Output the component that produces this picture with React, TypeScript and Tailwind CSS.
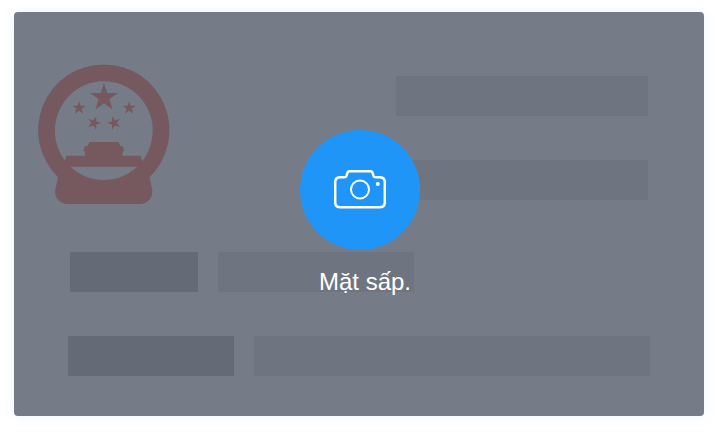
const STAR =
  "0,-10 2.25,-3.09 9.51,-3.09 3.63,1.18 5.88,8.09 0,3.82 -5.88,8.09 -3.63,1.18 -9.51,-3.09 -2.25,-3.09";

function Emblem() {
  return (
    <svg
      viewBox="0 0 132 140"
      className="h-[140px] w-[132px] shrink-0 fill-[#76595f]"
      aria-hidden="true"
    >
      <path
        fillRule="evenodd"
        d="M65.8 0.4A65.7 65.7 0 0 1 111.6 113.2L114.2 126C115.2 133.5 110 140 102 140H29.5C21.5 140 16.2 133.5 17.2 126L20 113.2A65.7 65.7 0 0 1 65.8 0.4ZM65.8 17.2A48.9 49.4 0 1 0 65.8 116A48.9 49.4 0 1 0 65.8 17.2Z"
      />
      <path d="M26.5 98L28.3 91.8H47V88L45.2 86.5L47 82H49.5L51.5 78H80.5L82.3 82H84.3L86.4 86.5L84.5 88V91.8H102.8L104.5 98V102.8H26.5Z" />
      <polygon points={STAR} transform="translate(66 33.6) scale(1.47)" />
      <polygon points={STAR} transform="translate(41 44) scale(0.7)" />
      <polygon points={STAR} transform="translate(91.2 44) scale(0.7)" />
      <polygon points={STAR} transform="translate(56 59) rotate(18) scale(0.72)" />
      <polygon points={STAR} transform="translate(76.2 59) rotate(-18) scale(0.72)" />
    </svg>
  );
}

function CameraIcon() {
  return (
    <svg
      viewBox="0 0 52 40"
      className="h-10 w-[52px] fill-none stroke-white"
      aria-hidden="true"
    >
      <path
        d="M6.5 7.2H10.2Q12 7.2 12.5 5.8L13.3 3.2Q13.9 1.2 15.5 1.2H36.5Q38.1 1.2 38.7 3.2L39.5 5.8Q40 7.2 41.8 7.2H45.5Q50.8 7.2 50.8 12V32.2Q50.8 37.2 45.5 37.2H6.5Q1.2 37.2 1.2 32.2V12Q1.2 7.2 6.5 7.2Z"
        strokeWidth="2.5"
      />
      <circle cx="26" cy="19.5" r="9" strokeWidth="2" />
      <circle cx="43.8" cy="14" r="2" className="fill-white stroke-none" />
    </svg>
  );
}

export default function App() {
  return (
    <main className="bg-white px-3.5 pt-3 pb-4 font-['Liberation_Sans',Arial,sans-serif]">
      <section className="relative rounded bg-[#767c87] pt-[52px] pb-10 shadow-[0_0_16px_rgba(30,150,250,0.08)]">
        <div className="flex justify-between pr-14 pl-6">
          <Emblem />
          <div className="flex w-[252px] flex-col gap-11 pt-3">
            <div className="h-10 bg-[#6f7580]" />
            <div className="h-10 bg-[#6f7580]" />
          </div>
        </div>
        <div className="mt-12 flex gap-5 pl-14">
          <div className="h-10 w-32 bg-[#656b76]" />
          <div className="h-10 w-[196px] bg-[#6f7580]" />
        </div>
        <div className="mt-11 flex gap-5 pr-[54px] pl-[54px]">
          <div className="h-10 w-[166px] bg-[#656b76]" />
          <div className="h-10 flex-1 bg-[#6f7580]" />
        </div>
        <button
          type="button"
          className="absolute inset-0 flex flex-col items-center gap-4 pt-[118px] pl-0.5 text-white"
        >
          <span className="flex size-[120px] items-center justify-center rounded-full bg-[#1f96f7]">
            <CameraIcon />
          </span>
          <span className="pl-2.5 text-2xl leading-8">Mặt sấp.</span>
        </button>
      </section>
    </main>
  );
}
